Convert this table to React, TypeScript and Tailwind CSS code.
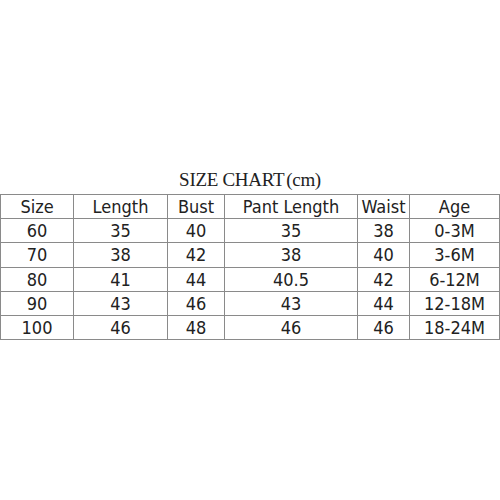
import React from "react";

const headers = ["Size", "Length", "Bust", "Pant Length", "Waist", "Age"];

const rows = [
  ["60", "35", "40", "35", "38", "0-3M"],
  ["70", "38", "42", "38", "40", "3-6M"],
  ["80", "41", "44", "40.5", "42", "6-12M"],
  ["90", "43", "46", "43", "44", "12-18M"],
  ["100", "46", "48", "46", "46", "18-24M"],
];

const cellFont = { fontFamily: "'DejaVu Sans Condensed', 'DejaVu Sans', sans-serif" };

const Row: React.FC<{ cells: string[]; tall?: boolean }> = ({ cells, tall }) => (
  <div className={`grid grid-cols-[73px_94px_57px_133px_52px_90px] ${tall ? "h-[25px]" : "h-[24px]"}`}>
    {cells.map((c, i) => (
      <div
        key={i}
        className="flex items-center justify-center border-r border-b border-[#8a8a8a] text-[18px] leading-none text-[#222]"
        style={cellFont}
      >
        {c}
      </div>
    ))}
  </div>
);

export default function App() {
  return (
    <div className="w-[500px] h-[500px] bg-white flex flex-col pt-[166px]">
      <div
        className="h-[28px] flex items-center justify-center text-[19px] text-[#222] tracking-[-0.3px]"
        style={{ fontFamily: "'Liberation Serif', serif" }}
      >
        SIZE CHART<span className="ml-[2px]">(cm)</span>
      </div>
      <div className="w-[500px] border-l border-t border-[#8a8a8a]">
        <Row cells={headers} />
        {rows.map((r, i) => (
          <Row key={r[0]} cells={r} tall={i === 1} />
        ))}
      </div>
    </div>
  );
}
